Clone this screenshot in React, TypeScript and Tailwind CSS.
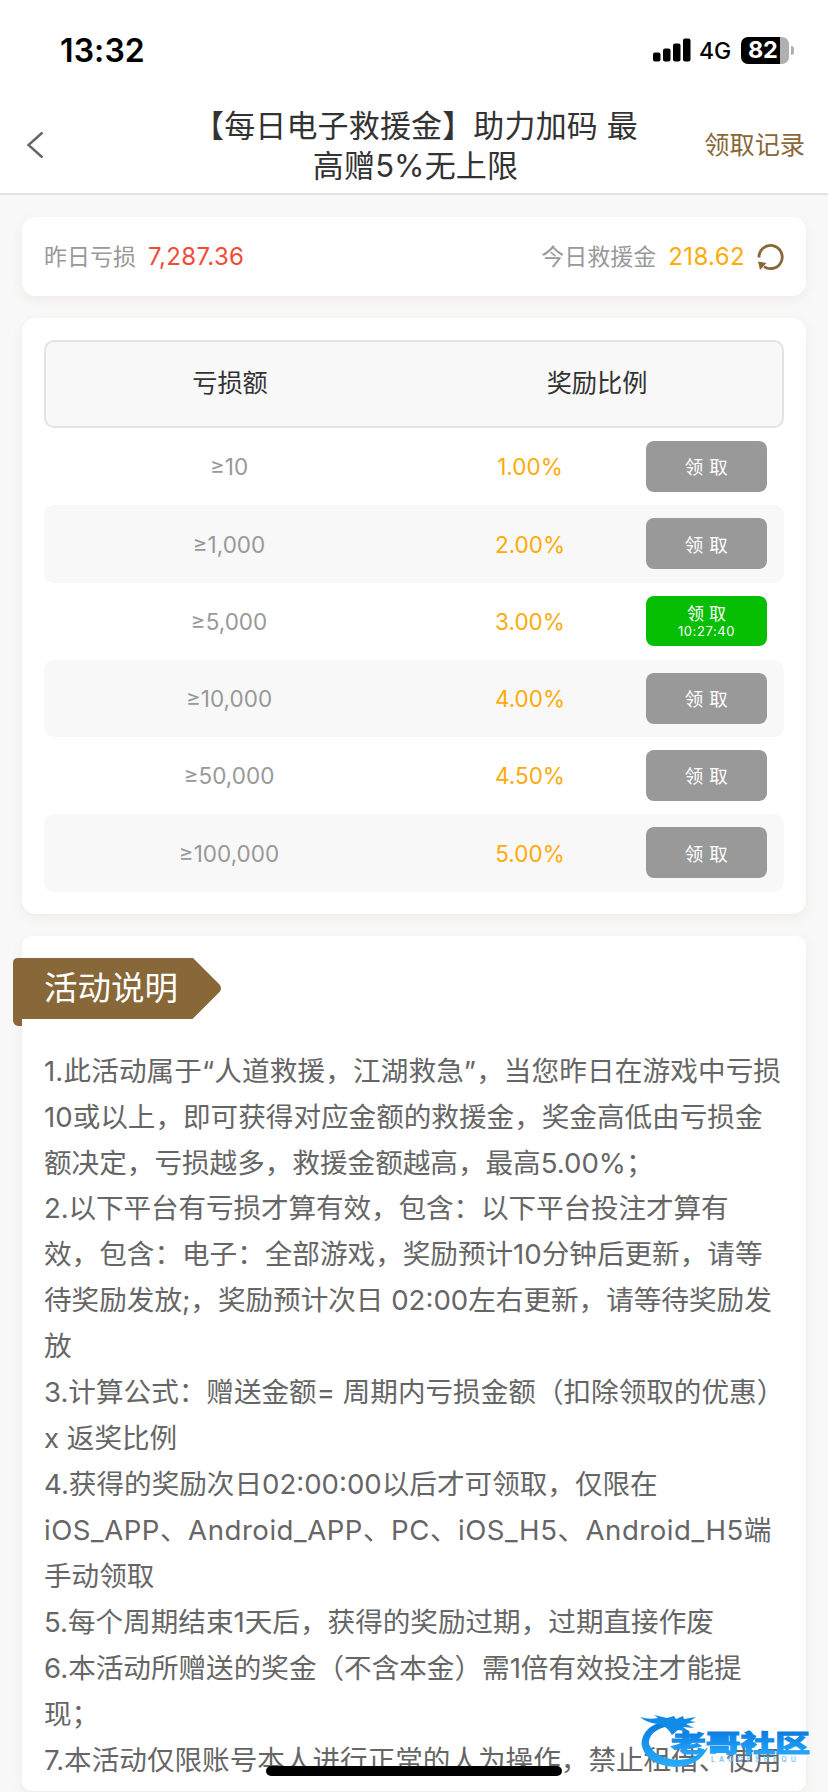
import type React from 'react'

interface Tier {
	amount: string
	rate: string
	countdown?: string
}

interface Rule {
	text: string
	className?: string
}

const tiers: Tier[] = [
	{ amount: '≥10', rate: '1.00%' },
	{ amount: '≥1,000', rate: '2.00%' },
	{ amount: '≥5,000', rate: '3.00%', countdown: '10:27:40' },
	{ amount: '≥10,000', rate: '4.00%' },
	{ amount: '≥50,000', rate: '4.50%' },
	{ amount: '≥100,000', rate: '5.00%' },
]

const rules: Rule[] = [
	{
		text: '1.此活动属于“人道救援，江湖救急”，当您昨日在游戏中亏损',
		className: 'tracking-[0.13px]',
	},
	{ text: '10或以上，即可获得对应金额的救援金，奖金高低由亏损金' },
	{ text: '额决定，亏损越多，救援金额越高，最高5.00%；' },
	{ text: '2.以下平台有亏损才算有效，包含：以下平台投注才算有', className: 'tracking-[-0.1px]' },
	{ text: '效，包含：电子：全部游戏，奖励预计10分钟后更新，请等' },
	{ text: '待奖励发放;，奖励预计次日 02:00左右更新，请等待奖励发' },
	{ text: '放' },
	{ text: '3.计算公式：赠送金额= 周期内亏损金额（扣除领取的优惠）' },
	{ text: 'x 返奖比例' },
	{ text: '4.获得的奖励次日02:00:00以后才可领取，仅限在' },
	{
		text: 'iOS_APP、Android_APP、PC、iOS_H5、Android_H5端',
		className: 'tracking-[0.52px]',
	},
	{ text: '手动领取' },
	{ text: '5.每个周期结束1天后，获得的奖励过期，过期直接作废' },
	{ text: '6.本活动所赠送的奖金（不含本金）需1倍有效投注才能提' },
	{ text: '现；' },
	{ text: '7.本活动仅限账号本人进行正常的人为操作，禁止租借、使用' },
]

const StatusBar = () => (
	<div className="flex h-[97px] items-center justify-between pr-[34px] pl-[60px] text-black">
		<div className="pt-[4px] text-[32px] leading-none font-semibold tracking-[0.1px]">13:32</div>
		<div className="flex items-center pt-[3px]">
			<svg width="38" height="24" viewBox="0 0 38 24">
				<rect x="0" y="14.5" width="7.5" height="9" rx="2" />
				<rect x="10" y="10.5" width="7.5" height="13" rx="2" />
				<rect x="20" y="5.5" width="7.5" height="18" rx="2" />
				<rect x="30" y="0.5" width="7.5" height="23" rx="2" />
			</svg>
			<span className="ml-[8px] w-[34px] pt-[2px] text-[23px] leading-none font-medium">4G</span>
			<div className="ml-[8px] flex h-[27px] w-[48px] items-center rounded-[7px] bg-linear-to-r from-black from-[81%] to-[#b0b0b0] to-[81%] pl-[7px] text-[23.5px] leading-none font-bold tracking-[-0.4px] text-white">
				82
			</div>
			<div className="ml-[2px] h-[9px] w-[3px] rounded-r-full bg-[#b0b0b0]" />
		</div>
	</div>
)

const Header = () => (
	<header className="flex h-[98px] items-center justify-between border-b-2 border-[#e3e3e3] bg-white pr-[23px] pl-[26px]">
		<svg width="120" height="28" viewBox="0 0 120 28" fill="none">
			<path d="M16.5 1.5 2.5 14l14 12.5" stroke="#666" strokeWidth="2.4" />
		</svg>
		<h1 className="pt-[2px] text-center text-[31px] leading-[40px] tracking-[0.15px] whitespace-nowrap text-[#333]">
			【每日电子救援金】助力加码 最
			<br />
			高赠5%无上限
		</h1>
		<a className="w-[120px] pt-px text-right text-[25.2px] whitespace-nowrap text-[#886738]">领取记录</a>
	</header>
)

const Summary = () => (
	<section className="flex h-[79px] items-center justify-between rounded-[14px] bg-white px-[22px] text-[23px] text-[#999] shadow-[0_4px_12px_rgba(136,103,56,0.08)]">
		<div className="flex items-center pt-px">
			昨日亏损
			<span className="ml-[12px] text-[24px] tracking-[0.35px] text-[#f04c38]">7,287.36</span>
		</div>
		<div className="flex items-center pt-px">
			今日救援金
			<span className="ml-[12px] text-[24px] tracking-[0.35px] text-[#ffaa09]">218.62</span>
			<svg width="27" height="28" viewBox="0 0 27 28" fill="none" className="ml-[12px]">
				<path d="M2 14.5A11.6 11.6 0 1 1 7 23.600" stroke="#886738" strokeWidth="2.8" />
				<path d="M1 18.500l8.500 1.500L3 27z" fill="#886738" />
			</svg>
		</div>
	</section>
)

const ClaimButton: React.FC<{ countdown?: string }> = ({ countdown }) =>
	countdown ? (
		<button className="flex h-[50px] w-[121px] flex-col items-center justify-center rounded-[8px] bg-[#06be02] pt-px text-white">
			<span className="text-[17px] leading-[19px]">领 取</span>
			<span className="text-[13px] leading-[14px] tracking-[0.600px]">{countdown}</span>
		</button>
	) : (
		<button className="h-[51px] w-[121px] rounded-[8px] bg-[#999] pt-[3px] text-[18.500px] tracking-[0.500px] text-white">
			领 取
		</button>
	)

const TierTable = () => (
	<section className="mt-[22px] rounded-[14px] bg-white p-[22px] shadow-[0_4px_12px_rgba(136,103,56,0.08)]">
		<div className="grid h-[88px] grid-cols-2 items-center rounded-[10px] border-2 border-[#e3e3e3] bg-[#f8f8f8] text-center text-[25.2px] text-[#333]">
			<div>亏损额</div>
			<div className="pr-[2px]">奖励比例</div>
		</div>
		{tiers.map(tier => (
			<div
				key={tier.amount}
				className="flex h-[77.28px] items-center rounded-[10px] text-center text-[22.5px] even:bg-white odd:bg-[#f8f8f8]"
			>
				<div className="w-[370px] pt-px text-[#999]">{tier.amount}</div>
				<div className="w-[232px] pt-px text-[#ffaa09]">{tier.rate}</div>
				<ClaimButton countdown={tier.countdown} />
			</div>
		))}
	</section>
)

const Rules = () => (
	<section className="mt-[22px] rounded-[10px] bg-white pt-[22px] pb-[7px] shadow-[0_4px_12px_rgba(136,103,56,0.08)]">
		<div className="relative -ml-[9px] flex h-[68px] w-[208px] pt-[10px] pl-[31px]">
			<svg width="208" height="68" viewBox="0 0 208 68" className="absolute top-0 left-0">
				<path
					d="M5 0H180L206.500 26.500Q209.500 30.500 206.500 34L179.500 61H9V68H5Q0 67 0 62V5Q0 0 5 0Z"
					fill="#886738"
				/>
			</svg>
			<h2 className="relative text-[33.500px] leading-[41px] whitespace-nowrap text-white">活动说明</h2>
		</div>
		<div className="pt-[23px] pl-[22px] text-[27.600px] leading-[45.950px] text-[#666]">
			{rules.map(rule => (
				<p key={rule.text} className={`whitespace-nowrap ${rule.className ?? ''}`}>
					{rule.text}
				</p>
			))}
		</div>
	</section>
)

const Watermark = () => (
	<svg width="180" height="70" viewBox="0 0 180 70" className="absolute top-[1704px] left-[636px]">
		<defs>
			<linearGradient id="brand" x1="0" y1="0" x2="0" y2="1">
				<stop offset="0" stopColor="#0878dc" />
				<stop offset="1" stopColor="#27adff" />
			</linearGradient>
		</defs>
		{/* tail ring */}
		<path
			d="M30 17Q6 22 5.500 40Q9 61 39 63Q64 62 72 43Q59 56 42 56Q18 54 13 40Q12 27 32 22Z"
			fill="url(#brand)"
		/>
		{/* dragon head */}
		<path
			d="M4 13Q13 16 22 14L18 11L31 14L38 12L40 15L47 12L48 15L60 13L54 17L60 18L50 20L58 24L47 23L54 28L42 26L36 31Q31 22 22 20Q11 19 4 13Z"
			fill="#118be6"
		/>
		<text
			x="35"
			y="48"
			textLength="139"
			lengthAdjust="spacingAndGlyphs"
			fontSize="24"
			fontWeight="900"
			fill="url(#brand)"
			stroke="url(#brand)"
			strokeWidth="1"
		>
			老哥社区
		</text>
		<text x="75" y="58" textLength="85" fontSize="7" fontWeight="600" fill="#79c3f9">
			LAOGESHEQU
		</text>
	</svg>
)

const App = () => (
	<div className="relative h-[1792px] w-[828px] overflow-hidden bg-[#f8f8f8] font-['Inter','Noto_Sans_CJK_SC',sans-serif]">
		<div className="bg-white">
			<StatusBar />
			<Header />
		</div>
		<main className="px-[22px] pt-[22px]">
			<Summary />
			<TierTable />
			<Rules />
		</main>
		<Watermark />
		<div className="absolute top-[1766px] left-[266px] h-[10px] w-[296px] rounded-full bg-black" />
	</div>
)

export default App
